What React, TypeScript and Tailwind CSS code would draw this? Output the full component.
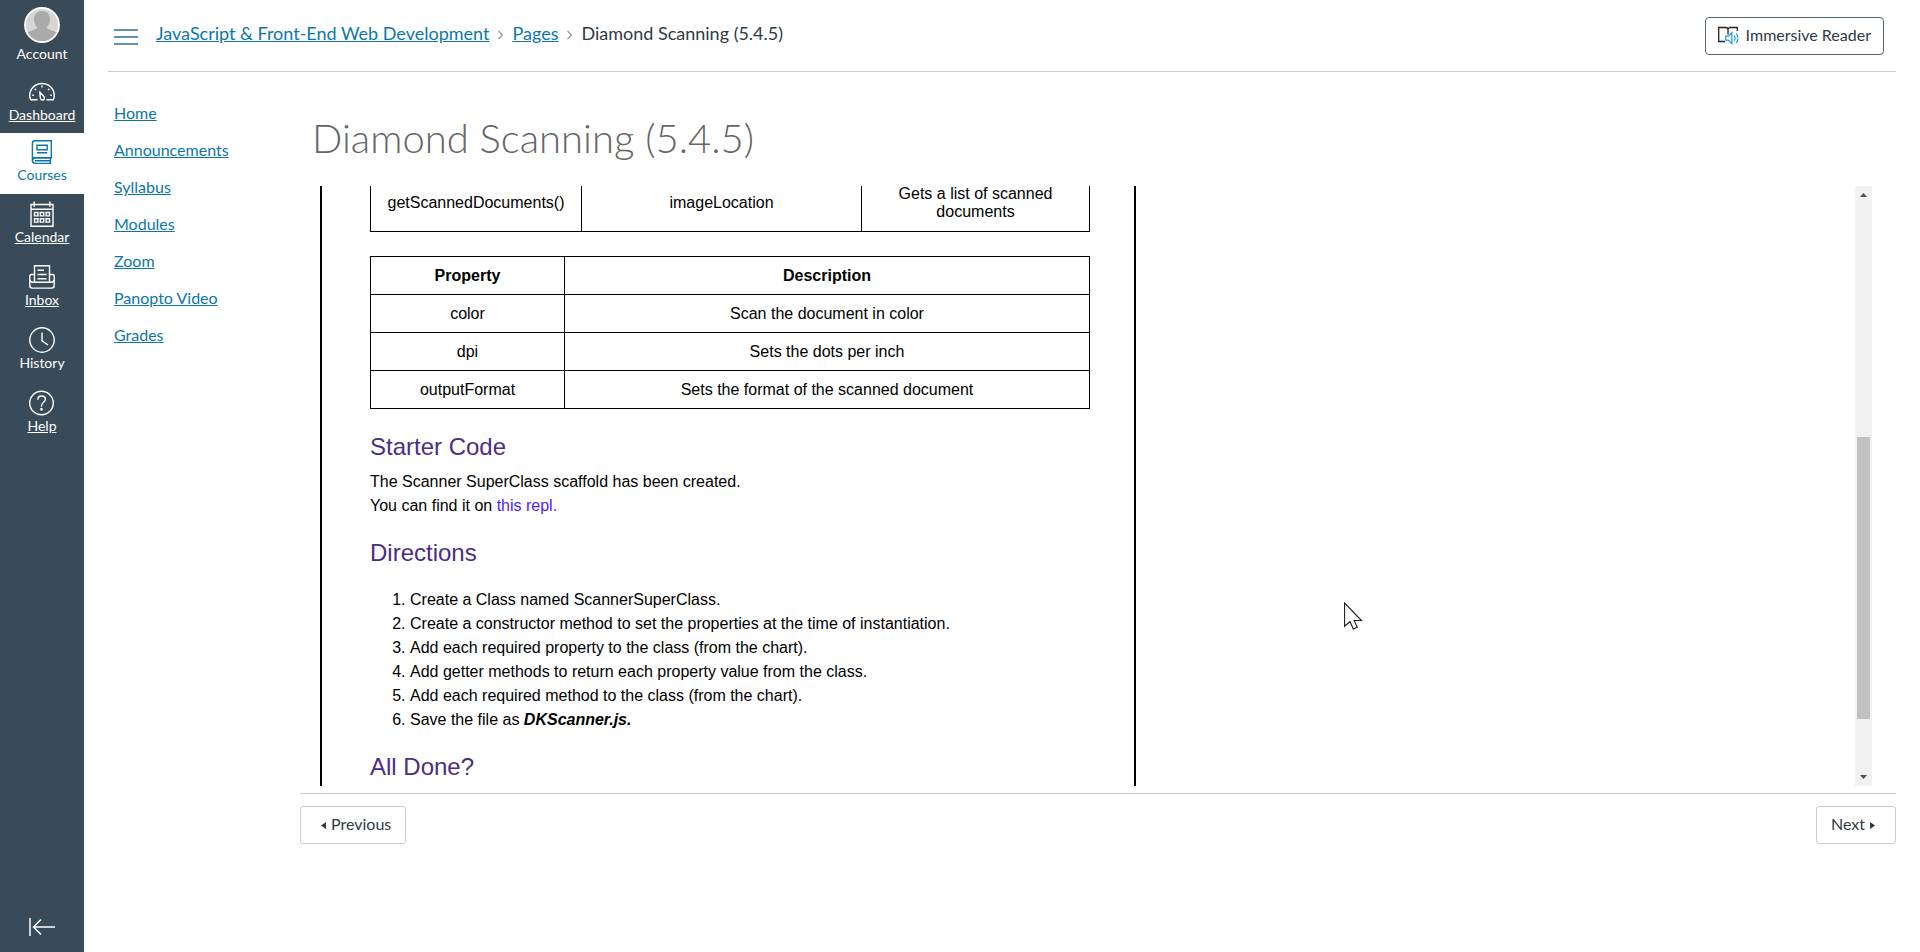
import React from "react";

type IconProps = { children: React.ReactNode };

function Icon({ children }: IconProps) {
  return (
    <svg width="26" height="26" viewBox="0 0 26 26" fill="none" stroke="currentColor" strokeWidth="1.4" aria-hidden="true">
      {children}
    </svg>
  );
}

const icons = {
  dashboard: (
    <Icon>
      <path d="M8.5 20.8H1.8c-.7-1.300-1.100-2.500-1.100-4C.7 9.900 6.200 4.500 13 4.500s12.300 5.400 12.300 12.300c0 1.500-.4 2.700-1.100 4h-6.700" />
      <path d="M10.900 13.300l3.800 3.900c1.100 1.200.9 2.700 0 3.400-1 .8-2.500.5-3.100-.8-.5-1.200-.7-4.500-.7-6.500Z" />
      <path d="M13 6.500v2M5.700 9.700l1.300 1.300M20.300 9.700L19 11M3.200 16.200h1.600M21.200 16.200h1.600" />
    </Icon>
  ),
  courses: (
    <Icon>
      <path d="M5.500 1.700H22.300V18.800H6.200c-1.700 0-2.800 1.200-2.800 2.800V4.300c0-1.600.8-2.600 2.100-2.600Z" />
      <path d="M22.300 18.800H6.200a2.800 2.800 0 0 0 0 5.600H22.300M21.300 19v5.200M6 21.700h15" />
      <path d="M8 6.200h10.200v4.600H8ZM8 13.800h10.200" />
    </Icon>
  ),
  calendar: (
    <Icon>
      <path d="M2 3.500h22v21.800H2ZM2 8.300h22M5.200.5v5.200M20.800.5v5.200" />
      <path d="M5.500 11.500h3.400v3.400H5.500ZM11.300 11.500h3.400v3.400h-3.400ZM17.100 11.500h3.400v3.400h-3.400ZM5.500 17.700h3.400v3.400H5.500ZM11.300 17.700h3.400v3.400h-3.400ZM17.100 17.700h3.400v3.400h-3.400Z" />
    </Icon>
  ),
  inbox: (
    <Icon>
      <path d="M5.500 18.200V1.700h15v16.500M8.500 6.200h6.500M8.500 10.500h9M8.500 14.800h9" />
      <path d="M5.500 10.500H2.400c-1 0-1.600.7-1.600 1.700v9.400c0 1.500 1 2.500 2.500 2.500h19.400c1.500 0 2.500-1 2.500-2.500v-9.400c0-1-.6-1.700-1.600-1.700h-3.100M.8 15.600c.4 1.700 1.400 2.600 3 2.600h18.400c1.600 0 2.600-.9 3-2.600" />
    </Icon>
  ),
  history: (
    <Icon>
      <circle cx="13" cy="13" r="12.200" />
      <path d="M13 5.500v8.300l6 4.200" />
    </Icon>
  ),
  help: (
    <Icon>
      <circle cx="12.500" cy="13" r="11.800" />
      <path d="M8.800 9.700c0-2.300 1.500-3.700 3.800-3.700 2.200 0 3.800 1.300 3.800 3.300 0 3.200-3.900 2.900-3.900 6.600v.8" />
      <circle cx="12.500" cy="19.300" r=".7" fill="currentColor" />
    </Icon>
  ),
};

function Avatar() {
  return (
    <svg width="36" height="36" viewBox="0 0 36 36" aria-hidden="true">
      <defs>
        <clipPath id="avatar-clip">
          <circle cx="18" cy="18" r="17" />
        </clipPath>
      </defs>
      <circle cx="18" cy="18" r="17" fill="#d6d6d6" />
      <g fill="#aaaaaa" clipPath="url(#avatar-clip)">
        <path d="M18 4c5 0 8 3.500 8 8.300 0 3-1 5.700-2.700 7.500-.8 1 .1 2.200 1.700 2.800 4 1.200 7.500 2.600 9 5V37H2v-9.400c1.500-2.400 5-3.800 9-5 1.600-.6 2.500-1.800 1.700-2.800C11 18 10 15.300 10 12.300 10 7.500 13 4 18 4Z" />
      </g>
      <circle cx="18" cy="18" r="17" fill="none" stroke="#fff" strokeWidth="1.800" />
    </svg>
  );
}

const globalNav = [
  { label: "Dashboard", icon: icons.dashboard, underline: true, size: "h-[61px] pt-[7px]" },
  { label: "Courses", icon: icons.courses, size: "h-[61px] bg-white pt-[6px] text-[#0b77a9]" },
  { label: "Calendar", icon: icons.calendar, underline: true, size: "h-[63px] pt-[7px]" },
  { label: "Inbox", icon: icons.inbox, underline: true, size: "h-[63px] pt-[7px]" },
  { label: "History", icon: icons.history, size: "h-[63px] pt-[7px]" },
  { label: "Help", icon: icons.help, underline: true, size: "h-[63px] pt-[7px]" },
];

const courseNav = ["Home", "Announcements", "Syllabus", "Modules", "Zoom", "Panopto Video", "Grades"];

const properties = [
  ["color", "Scan the document in color"],
  ["dpi", "Sets the dots per inch"],
  ["outputFormat", "Sets the format of the scanned document"],
];

const directions = [
  "Create a Class named ScannerSuperClass.",
  "Create a constructor method to set the properties at the time of instantiation.",
  "Add each required property to the class (from the chart).",
  "Add getter methods to return each property value from the class.",
  "Add each required method to the class (from the chart).",
];

function GlobalNav() {
  return (
    <nav aria-label="Global" className="flex w-21 shrink-0 flex-col bg-[#394b58] text-sm leading-4 text-white">
      <a href="#account" className="flex h-18 flex-col items-center gap-[3px] pt-[7px]">
        <Avatar />
        Account
      </a>
      {globalNav.map((item) => (
        <a
          key={item.label}
          href={"#" + item.label.toLowerCase()}
          className={"flex flex-col items-center gap-0.5 " + item.size + (item.underline ? " underline" : "")}
        >
          {item.icon}
          {item.label}
        </a>
      ))}
      <button type="button" aria-label="Minimize global navigation" className="mt-auto flex justify-center pb-3">
        <svg width="26" height="26" viewBox="0 0 26 26" fill="none" stroke="currentColor" strokeWidth="1.500">
          <path d="M1 4v18M4.500 13H26M12 5.500L4.500 13l7.500 7.500" />
        </svg>
      </button>
    </nav>
  );
}

function Header() {
  return (
    <header className="flex h-18 items-start border-b border-[#c7cdd1] pl-[6px] pr-3">
      <button type="button" aria-label="Course navigation menu" className="mt-7 text-[#2d6f9f]">
        <svg width="24" height="18" viewBox="0 0 24 18" stroke="currentColor" strokeWidth="1.600">
          <path d="M0 2h24M0 9h24M0 16h24" />
        </svg>
      </button>
      <nav aria-label="Breadcrumb" className="ml-[18px] mt-[21px] flex items-center gap-2 text-lg leading-6">
        <a href="#course" className="text-[#0b77a9] underline">JavaScript &amp; Front-End Web Development</a>
        <Chevron />
        <a href="#pages" className="text-[#0b77a9] underline">Pages</a>
        <Chevron />
        <span>Diamond Scanning (5.4.5)</span>
      </nav>
      <button type="button" className="ml-auto mt-[17px] flex h-[38px] items-center gap-[7px] rounded-[4px] border border-[#556572] px-3 pb-0.5">
        <svg width="21" height="20" viewBox="0 0 21 20" fill="none" aria-hidden="true">
          <path d="M7 16.500H.7V2.500H7.500c1.500 0 2.500.7 2.500 2v5M10 4.500c0-1.300 1-2 2.500-2h6.800v3.500" stroke="#222" strokeWidth="1.300" />
          <path d="M7.700 11.200h2.500l3.700-3.500v10.800l-3.700-3.300H7.700ZM16 10.300c1.300 1.700 1.300 4 0 5.700M18.200 8.300c2.300 2.800 2.300 6.800 0 9.600" stroke="#1f9be8" strokeWidth="1.200" />
        </svg>
        Immersive Reader
      </button>
    </header>
  );
}

function Chevron() {
  return (
    <svg width="7" height="10" viewBox="0 0 7 10" fill="none" stroke="#8b969e" strokeWidth="1.200" aria-hidden="true" className="mt-1">
      <path d="M1.500 1l4 4-4 4" />
    </svg>
  );
}

function Assignment() {
  return (
    <article className="-mt-[13px] w-[816px] shrink-0 self-start border-x-2 border-black pb-12 pl-12 pr-11 font-['Liberation_Sans',Arial,sans-serif] text-base leading-6 text-black">
      <table className="w-full table-fixed border-collapse text-center leading-[18px]">
        <colgroup>
          <col className="w-[211px]" />
          <col className="w-[280px]" />
          <col />
        </colgroup>
        <tbody>
          <tr className="h-[58px]">
            <td className="border border-black px-2">getScannedDocuments()</td>
            <td className="border border-black px-2">imageLocation</td>
            <td className="border border-black px-8">Gets a list of scanned documents</td>
          </tr>
        </tbody>
      </table>
      <table className="mt-6 w-full table-fixed border-collapse text-center leading-[18px]">
        <colgroup>
          <col className="w-[194px]" />
          <col />
        </colgroup>
        <thead>
          <tr className="h-[38px]">
            <th className="border border-black">Property</th>
            <th className="border border-black">Description</th>
          </tr>
        </thead>
        <tbody>
          {properties.map(([name, description]) => (
            <tr key={name} className="h-[38px]">
              <td className="border border-black">{name}</td>
              <td className="border border-black">{description}</td>
            </tr>
          ))}
        </tbody>
      </table>
      <h2 className="mt-6 text-2xl leading-7 text-[#4b2e83]">Starter Code</h2>
      <p className="mt-[9px]">
        The Scanner SuperClass scaffold has been created.
        <br />
        You can find it on <a href="#repl" className="text-[#4a1eff]">this repl.</a>
      </p>
      <h2 className="mt-[21px] text-2xl leading-7 text-[#4b2e83]">Directions</h2>
      <ol className="mt-[21px] list-decimal pl-10">
        {directions.map((step) => (
          <li key={step}>{step}</li>
        ))}
        <li>
          Save the file as <strong className="italic">DKScanner.js.</strong>
        </li>
      </ol>
      <h2 className="mt-[21px] text-2xl leading-7 text-[#4b2e83]">All Done?</h2>
    </article>
  );
}

function ScrollBar() {
  return (
    <div aria-hidden="true" className="ml-auto flex w-[17px] flex-col items-center bg-[#f1f1f1]">
      <svg width="17" height="17" viewBox="0 0 17 17" fill="#505050">
        <path d="M5 11h7L8.500 7Z" />
      </svg>
      <div className="grow-234 basis-0" />
      <div className="w-[13px] grow-282 basis-0 bg-[#c1c1c1]" />
      <div className="grow-50 basis-0" />
      <svg width="17" height="17" viewBox="0 0 17 17" fill="#505050">
        <path d="M5 6h7L8.500 10Z" />
      </svg>
    </div>
  );
}

export default function App() {
  return (
    <div className="relative flex min-h-screen bg-white font-[Lato,sans-serif] text-base text-[#2d3b45]">
      <GlobalNav />
      <div className="min-w-0 grow px-6">
        <Header />
        <div className="flex">
          <nav aria-label="Course" className="w-48 shrink-0 pl-[6px] pt-[22px]">
            <ul>
              {courseNav.map((label) => (
                <li key={label} className="h-[37px] leading-[37px]">
                  <a href={"#" + label.toLowerCase().replace(" ", "-")} className="text-[#0b77a9] underline">{label}</a>
                </li>
              ))}
            </ul>
          </nav>
          <main className="min-w-0 grow">
            <h1 className="px-3 pb-[23px] pt-[41px] text-[40px] font-light leading-[50px] text-[#666]">Diamond Scanning (5.4.5)</h1>
            <section className="flex h-[600px] overflow-hidden pl-5 pr-6">
              <Assignment />
              <ScrollBar />
            </section>
            <footer className="mt-[7px] flex justify-between border-t border-[#c7cdd1] pt-3">
              <button type="button" className="flex h-[38px] items-center gap-[5px] rounded-[3px] border border-[#c7cdd1] pb-0.5 pl-5 pr-[14px]">
                <svg width="5" height="7" viewBox="0 0 5 7" fill="#2d3b45" aria-hidden="true" className="mt-0.5"><path d="M5 0v7L0 3.500Z" /></svg>
                Previous
              </button>
              <button type="button" className="flex h-[38px] items-center gap-[5px] rounded-[3px] border border-[#c7cdd1] pb-0.5 pl-[14px] pr-5">
                Next
                <svg width="5" height="7" viewBox="0 0 5 7" fill="#2d3b45" aria-hidden="true" className="mt-0.5"><path d="M0 0v7L5 3.500Z" /></svg>
              </button>
            </footer>
          </main>
        </div>
      </div>
      <svg aria-hidden="true" width="19" height="28" viewBox="0 0 19 28" className="pointer-events-none absolute left-[1344px] top-[602px]" fill="#fff" stroke="#1c1c28" strokeWidth="1.100">
        <path d="M.6 1v23.200l5.400-4.700 3.300 7.500 4-1.700-3.200-6.800h7.400Z" />
      </svg>
    </div>
  );
}
